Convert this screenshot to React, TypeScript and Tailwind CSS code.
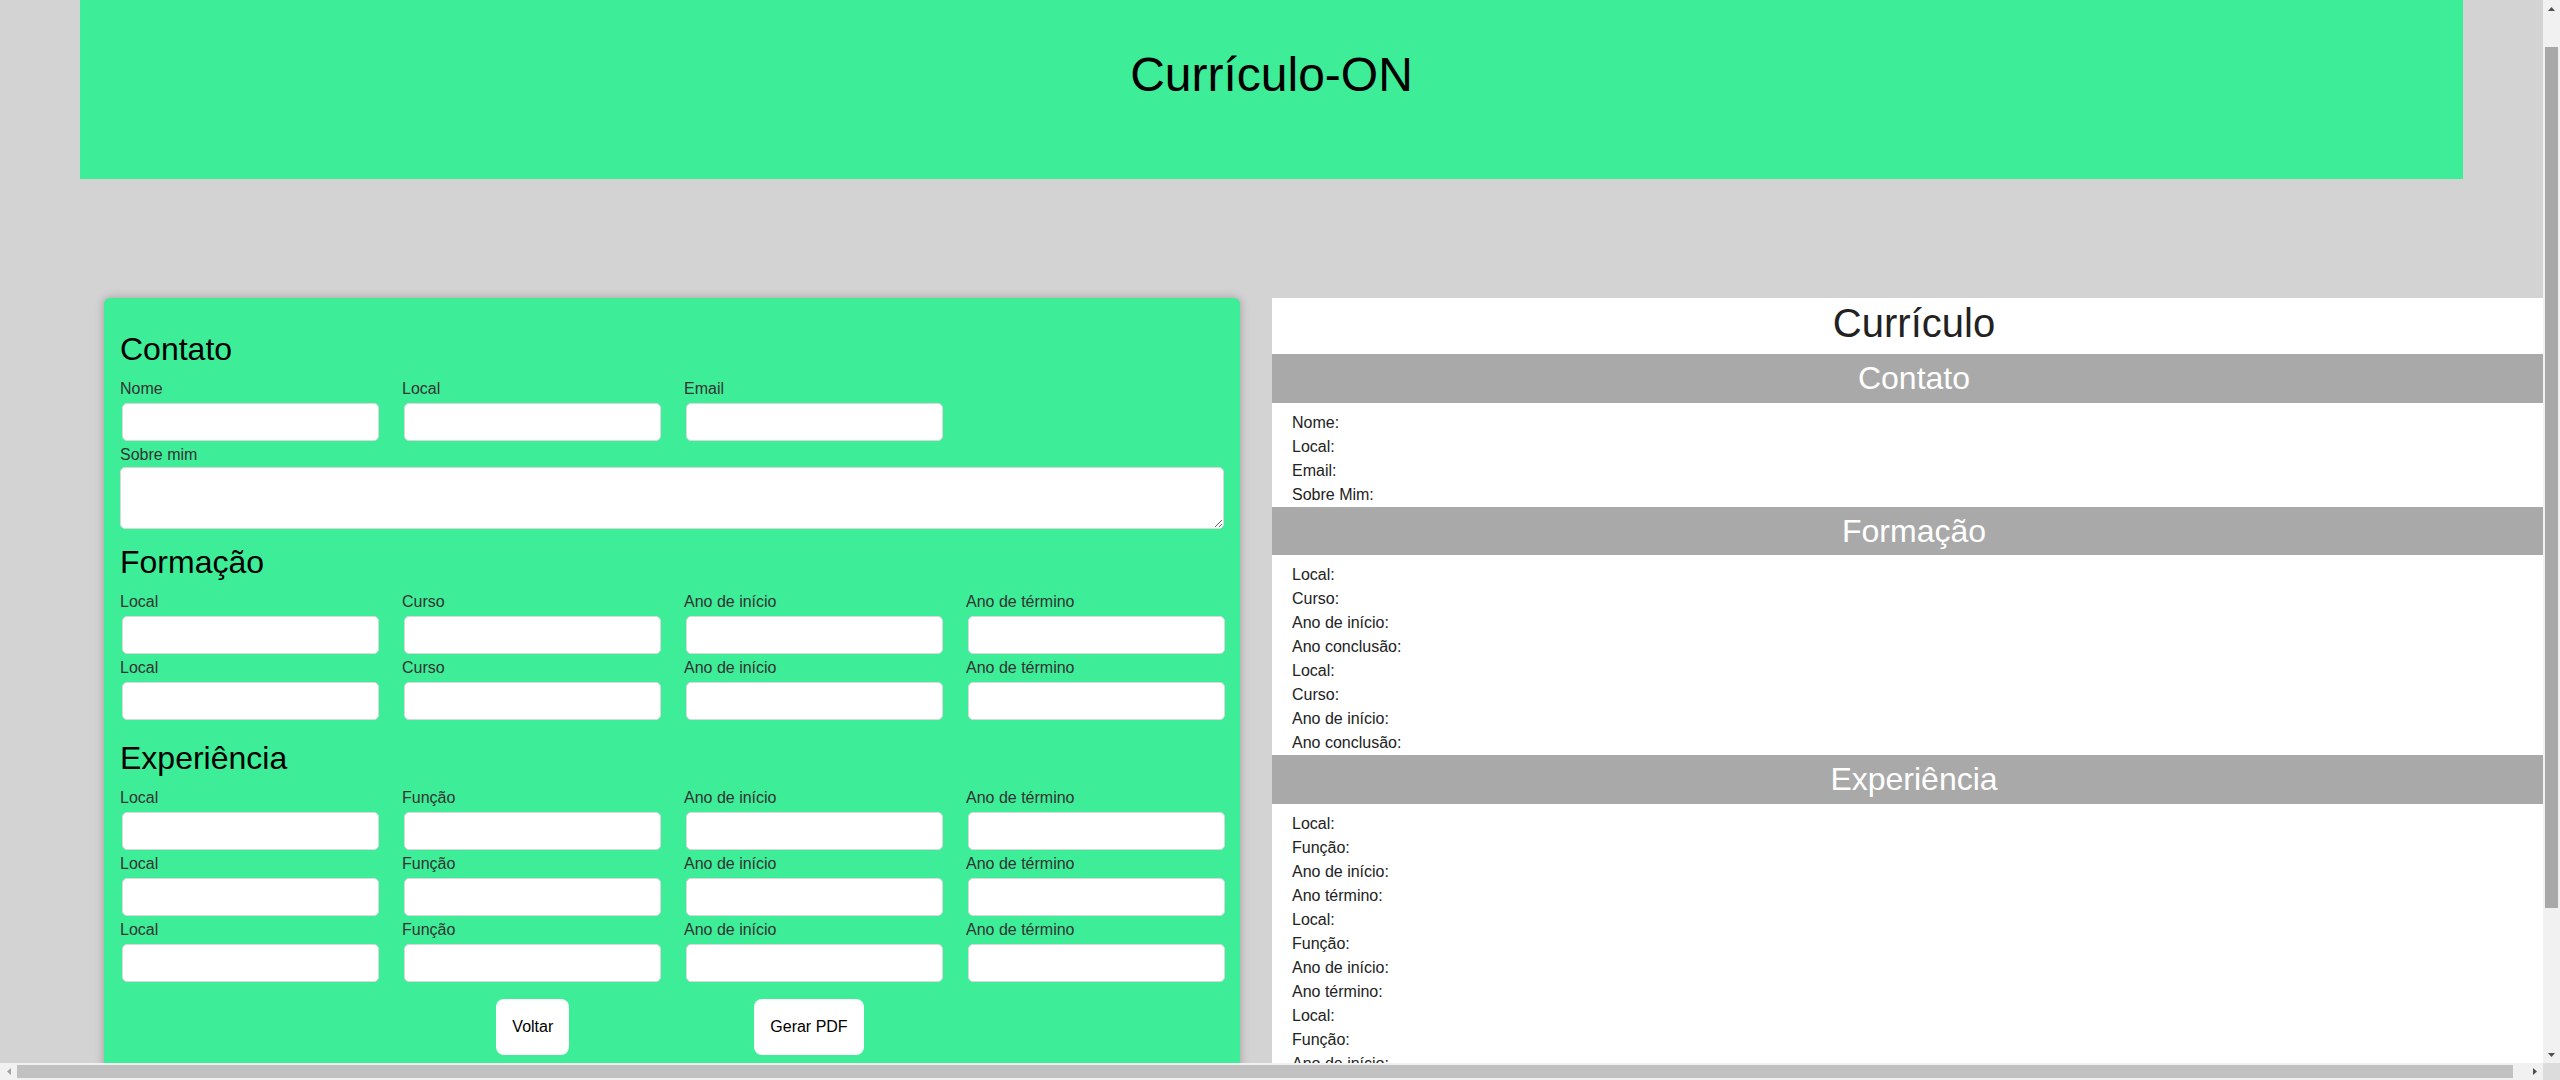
const formacao = ["Local", "Curso", "Ano de início", "Ano de término"];
const experiencia = ["Local", "Função", "Ano de início", "Ano de término"];

function Field({ label }: { label: string }) {
  return (
    <div>
      <label className="block text-[16px] leading-[18px] text-[#333]">
        {label}
      </label>
      <input
        type="text"
        className="mt-[5px] mb-[5px] ml-[2px] block h-[38px] w-[257px] rounded-[5px] border border-[#d9d9d9] bg-white"
      />
    </div>
  );
}

function Row({ labels }: { labels: string[] }) {
  return (
    <div className="grid grid-cols-4 gap-x-[24px]">
      {labels.map((label, i) => (
        <Field key={i} label={label} />
      ))}
    </div>
  );
}

function FormCard() {
  return (
    <section className="w-[1136px] shrink-0 rounded-[6px] bg-[#3ded97] px-4 pt-[33px] pb-4 shadow-[0_0_10px_rgba(0,0,0,0.25)]">
      <h2 className="mb-[12px] text-[32px] leading-[37px] text-black">
        Contato
      </h2>
      <Row labels={["Nome", "Local", "Email"]} />
      <label className="block text-[16px] leading-[18px] text-[#333]">
        Sobre mim
      </label>
      <textarea className="mt-[3px] block h-[62px] w-full rounded-[5px] border border-[#d9d9d9] bg-white" />

      <h2 className="mt-[15px] mb-[12px] text-[32px] leading-[37px] text-black">
        Formação
      </h2>
      <Row labels={formacao} />
      <Row labels={formacao} />

      <h2 className="mt-[15px] mb-[12px] text-[32px] leading-[37px] text-black">
        Experiência
      </h2>
      <Row labels={experiencia} />
      <Row labels={experiencia} />
      <Row labels={experiencia} />

      <div className="mt-[12px] flex justify-center gap-[185px] pl-4">
        <button className="h-[56px] rounded-[8px] bg-white px-4 text-[16px] text-black">
          Voltar
        </button>
        <button className="h-[56px] rounded-[8px] bg-white px-4 text-[16px] text-black">
          Gerar PDF
        </button>
      </div>
    </section>
  );
}

function Bar({ title }: { title: string }) {
  return (
    <h3 className="bg-[#a9a9a9] py-[6px] text-center text-[32px] leading-[36.5px] text-white">
      {title}
    </h3>
  );
}

function List({ items }: { items: string[] }) {
  return (
    <div className="px-5 pt-2">
      {items.map((item, i) => (
        <p key={i} className="text-[16px] leading-[24px] text-[#222]">
          {item}
        </p>
      ))}
    </div>
  );
}

function Preview() {
  return (
    <section className="w-[1284px] shrink-0 bg-white pb-2">
      <h2 className="h-[56px] pt-[2px] text-center text-[40px] leading-[46px] text-[#222]">
        Currículo
      </h2>
      <Bar title="Contato" />
      <List items={["Nome:", "Local:", "Email:", "Sobre Mim:"]} />
      <Bar title="Formação" />
      <List
        items={[
          "Local:",
          "Curso:",
          "Ano de início:",
          "Ano conclusão:",
          "Local:",
          "Curso:",
          "Ano de início:",
          "Ano conclusão:",
        ]}
      />
      <Bar title="Experiência" />
      <List
        items={[
          "Local:",
          "Função:",
          "Ano de início:",
          "Ano término:",
          "Local:",
          "Função:",
          "Ano de início:",
          "Ano término:",
          "Local:",
          "Função:",
          "Ano de início:",
          "Ano término:",
        ]}
      />
    </section>
  );
}

// browser scrollbars as they appear in the capture
function Scrollbars() {
  return (
    <>
      <div className="fixed top-0 right-0 flex h-[1063px] w-[17px] flex-col items-center bg-[#f1f1f1]">
        <div className="flex h-[17px] w-[17px] items-center justify-center">
          <svg width="7" height="4" viewBox="0 0 7 4">
            <polygon points="3.5,0 7,4 0,4" fill="#505050" />
          </svg>
        </div>
        <div className="mt-[30px] h-[861px] w-[13px] bg-[#a8a8a8]" />
        <div className="flex-1" />
        <div className="flex h-[17px] w-[17px] items-center justify-center">
          <svg width="7" height="4" viewBox="0 0 7 4">
            <polygon points="0,0 7,0 3.5,4" fill="#505050" />
          </svg>
        </div>
      </div>

      <div className="fixed bottom-0 left-0 flex h-[17px] w-[2543px] items-center bg-[#f1f1f1]">
        <div className="flex h-[17px] w-[17px] items-center justify-center">
          <svg width="4" height="7" viewBox="0 0 4 7">
            <polygon points="4,0 4,7 0,3.5" fill="#a3a3a3" />
          </svg>
        </div>
        <div className="h-[13px] w-[2496px] bg-[#c1c1c1]" />
        <div className="flex-1" />
        <div className="flex h-[17px] w-[17px] items-center justify-center">
          <svg width="4" height="7" viewBox="0 0 4 7">
            <polygon points="0,0 4,3.5 0,7" fill="#505050" />
          </svg>
        </div>
      </div>

      <div className="fixed right-0 bottom-0 h-[17px] w-[17px] bg-[#dcdcdc]" />
    </>
  );
}

export default function App() {
  return (
    <div className="min-h-screen w-max min-w-full bg-[#d3d3d3] pb-[163px] font-['Liberation_Sans',Arial,sans-serif]">
      <header className="ml-[80px] h-[179px] w-[2383px] bg-[#3ded97] pt-[47px] text-center">
        <h1 className="text-[48px] leading-[55px] text-black">Currículo-ON</h1>
      </header>

      <main className="mt-[119px] flex items-start gap-[32px] pl-[104px]">
        <FormCard />
        <Preview />
      </main>

      <Scrollbars />
    </div>
  );
}
